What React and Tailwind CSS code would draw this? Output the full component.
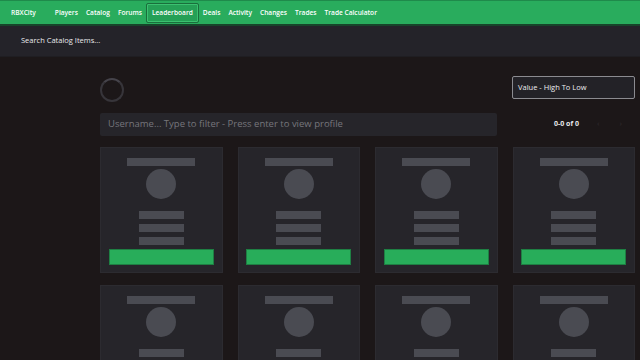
import React from "react";

const links = ["Players", "Catalog", "Forums", "Leaderboard", "Deals", "Activity", "Changes", "Trades", "Trade Calculator"];

function Card() {
  return (
    <div className="h-[126px] bg-[#26252a] border border-[#2c2b30] flex flex-col items-center pt-[10px]">
      <div className="w-[68px] h-[8px] bg-[#4a4b52]" />
      <div className="mt-[3px] w-[30px] h-[30px] rounded-full bg-[#4a4b52]" />
      <div className="mt-[12px] w-[45px] h-[8px] bg-[#4a4b52]" />
      <div className="mt-[5px] w-[45px] h-[8px] bg-[#4a4b52]" />
      <div className="mt-[5px] w-[45px] h-[8px] bg-[#4a4b52]" />
      <div className="mt-[4px] w-[105px] h-[16px] bg-[#28ad5a] border border-[#1e7f43]" />
    </div>
  );
}

export default function App() {
  return (
    <div className="w-[640px] h-[360px] overflow-hidden bg-[#1c1718] font-['Open_Sans',sans-serif]">
      <div className="h-[26px] bg-[#29ac5d] border-t border-[#1f8a4b] border-b-2 border-b-[#17442a] flex items-center pl-[11px] text-white text-[6.6px] font-semibold">
        <span className="mr-[19px]">RBXCity</span>
        <div className="flex items-center gap-[8px]">
          {links.map((l) =>
            l === "Leaderboard" ? (
              <span key={l} className="-mx-[4px] px-[5px] h-[20px] flex items-center border border-[#1a6e3c] rounded-[2px] bg-[#25a056] shadow-[inset_0_0_0_1px_#3cc070]">
                {l}
              </span>
            ) : (
              <span key={l}>{l}</span>
            )
          )}
        </div>
      </div>
      <div className="h-[31px] bg-[#242329] flex items-center pl-[21px] text-[7.5px] text-[#e8e8ec] border-b border-[#1f1e22]">
        Search Catalog Items...
      </div>
      <div className="ml-[100px] w-[535px]">
        <div className="flex justify-between items-start pt-[19px]">
          <div className="mt-[2px] w-[24px] h-[24px] rounded-full border-[2px] border-[#37353a] border-t-[#45434a]" />
          <div className="w-[123px] h-[23px] border border-[#8b8b90] rounded-[2px] bg-[#232227] flex items-center pl-[5px] text-[7.5px] text-[#ececf0]">
            Value - High To Low
          </div>
        </div>
        <div className="flex items-center mt-[11px]">
          <div className="w-[397px] h-[23px] bg-[#26252a] rounded-[2px] flex items-center pl-[8px] text-[9.5px] text-[#76767c]">
            Username... Type to filter - Press enter to view profile
          </div>
          <div className="flex-1 flex items-center pl-[57px] text-[7px] font-bold text-[#e8e8ea]">
            <span>0-0 of 0</span>
            <span className="ml-[18px] text-[#2a2527]">‹</span>
            <span className="ml-[20px] text-[#2a2527]">›</span>
          </div>
        </div>
        <div className="grid grid-cols-4 gap-x-[15px] gap-y-[12px] mt-[11px]">
          {Array.from({ length: 8 }).map((_, i) => (
            <Card key={i} />
          ))}
        </div>
      </div>
    </div>
  );
}
